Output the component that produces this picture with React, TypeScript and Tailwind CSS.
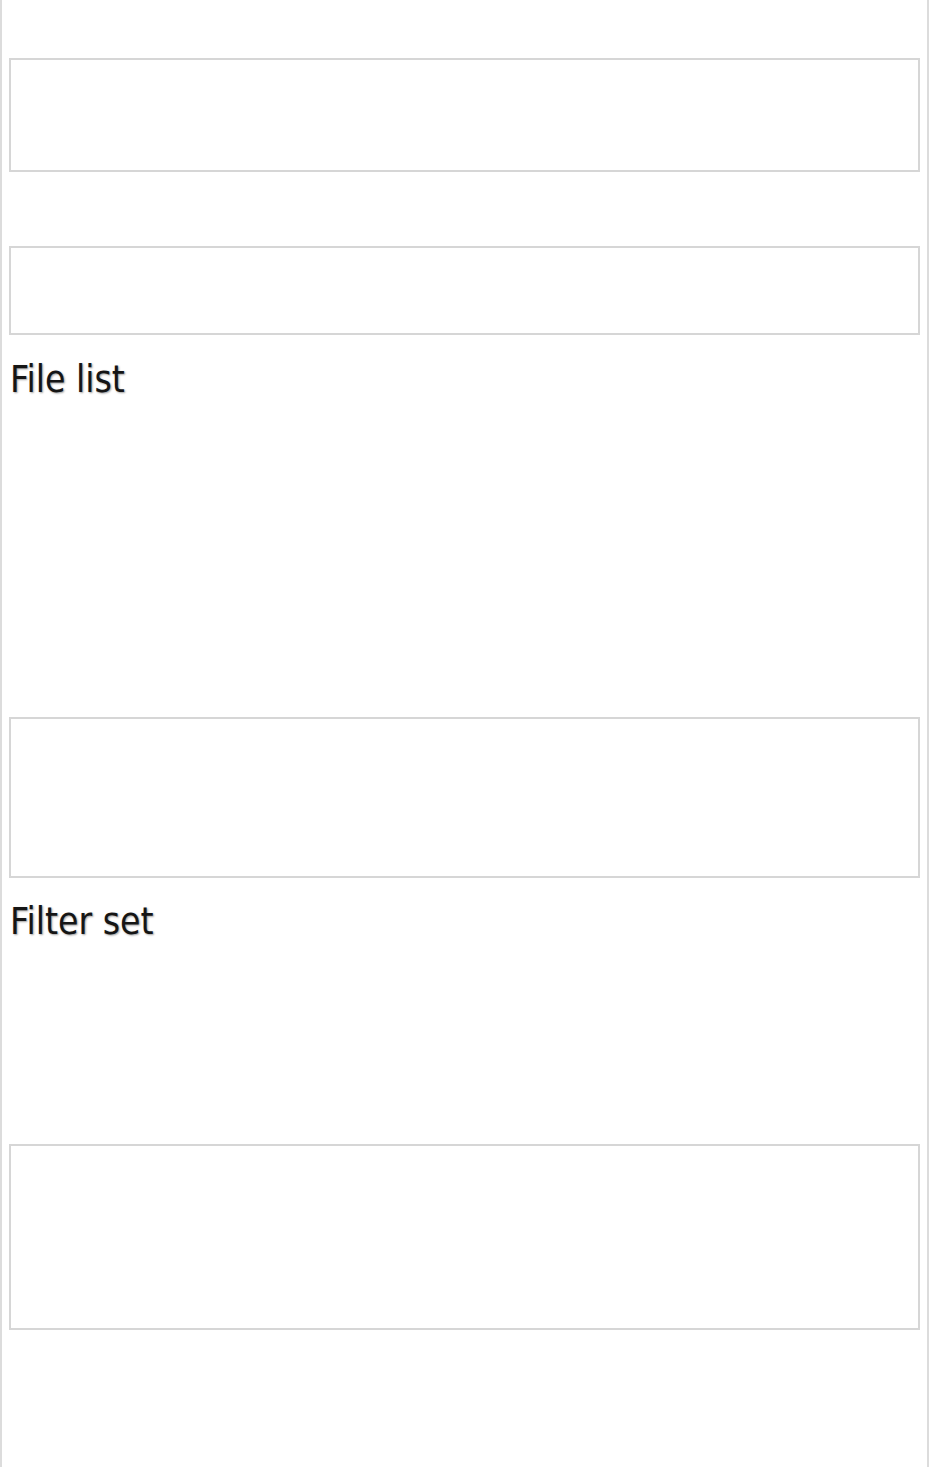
import React from "react";

const headingStyle =
  "font-['DejaVu_Sans_Condensed','DejaVu_Sans',sans-serif] [font-stretch:condensed] text-[37px] leading-[42px] text-[#151515] [text-shadow:1px_1px_2px_#a0a0a0] m-0 ml-[1px] font-normal";

export default function App() {
  return (
    <div className="w-[929px] min-h-[1467px] bg-white border-l-2 border-r-2 border-[#dcdcdc] px-[7px] pt-[58px]">
      <div className="h-[114px] border-2 border-[#d6d6d6] bg-white" />
      <div className="h-[89px] mt-[74px] border-2 border-[#d6d6d6] bg-white" />
      <h2 className={`${headingStyle} mt-[24px]`}>File list</h2>
      <div className="h-[161px] mt-[316px] border-2 border-[#d6d6d6] bg-white" />
      <h2 className={`${headingStyle} mt-[23px]`}>Filter set</h2>
      <div className="h-[186px] mt-[201px] border-2 border-[#d6d6d6] bg-white" />
    </div>
  );
}
